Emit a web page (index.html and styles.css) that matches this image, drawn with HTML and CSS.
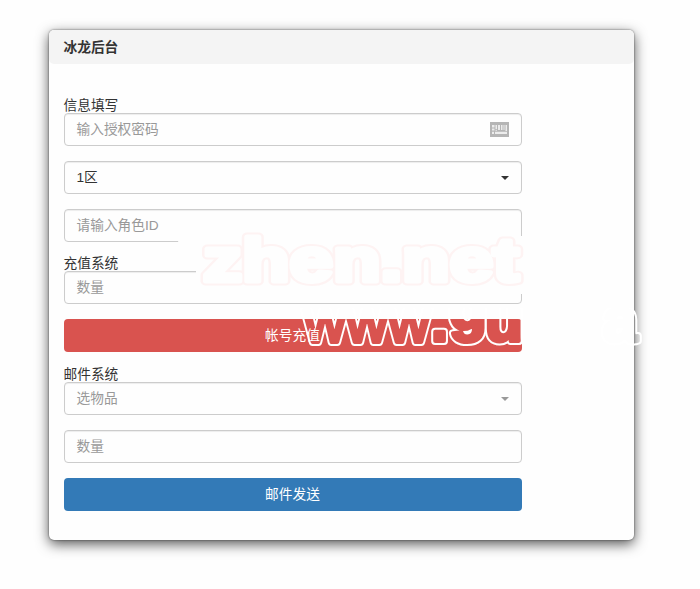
FILE: index.html
```html
<!DOCTYPE html>
<html lang="zh-CN">
<head>
<meta charset="utf-8">
<title>冰龙后台</title>
<link rel="stylesheet" href="styles.css">
</head>
<body>
<main class="panel">
  <header class="panel-heading">冰龙后台</header>
  <form class="panel-body">
    <div class="label">信息填写</div>
    <div class="control muted">输入授权密码
      <svg class="keyboard" width="19" height="15" viewBox="0 0 19 15"><path fill="#b5b5b5" d="M0 0h19v15H0z"/><path fill="#ececec" d="M2 3h2.500v2.500H2zM5.500 3h1.500v4H5.500zM8 3h2v5H8zM11 3h1.500v5H11zM13.500 3h1v5h-1zM15.500 3H17v6h-1.500zM2 6.500h2.500v2H2zM5.500 7.700H7v1H5.500zM2 9.700h2V12H2zM5 9.700h12V12H5z"/></svg>
    </div>
    <div class="control">1区<span class="caret"></span></div>
    <div class="control muted">请输入角色ID</div>
    <div class="label">充值系统</div>
    <div class="control muted">数量</div>
    <div class="button danger">帐号充值</div>
    <div class="label">邮件系统</div>
    <div class="control muted">选物品<span class="caret"></span></div>
    <div class="control muted">数量</div>
    <div class="button primary">邮件发送</div>
  </form>
</main>
<svg class="watermark" width="700" height="589" viewBox="0 0 700 589">
  <defs>
    <g id="site">
      <text class="thin" x="304" y="342" textLength="126" lengthAdjust="spacingAndGlyphs">www</text>
      <text x="431" y="341">.</text>
      <text x="449" y="329">g</text>
      <text x="485" y="341">u</text>
      <text x="603" y="341">a</text>
    </g>
    <mask id="outline" maskUnits="userSpaceOnUse" x="290" y="308" width="370" height="52">
      <use href="#site" class="outer"/>
      <use href="#site" class="inner"/>
    </mask>
  </defs>
  <path fill="#fefefe" d="M178 241L218 236V229H299V241H455L472 229H512V236H523V244H530V260L538 270L522 278V294H380V289H196V270L184 260Z"/>
  <text class="mark-pink" x="203" y="281" textLength="316" lengthAdjust="spacingAndGlyphs">zhen.net</text>
  <text class="mark-fill" x="203" y="281" textLength="316" lengthAdjust="spacingAndGlyphs">zhen.net</text>
  <path mask="url(#outline)" fill="#fff" d="M290 280h370v80H290z"/>
</svg>
</body>
</html>
```
FILE: styles.css
```css
* { box-sizing: border-box; }
body {
  margin: 0;
  padding: 30px 0 0 49px;
  height: 589px;
  overflow: hidden;
  background: #fefefe;
  color: #333;
  font: 13.7px/20px "Liberation Sans", "Noto Sans CJK SC", sans-serif;
}
.panel {
  width: 585px;
  height: 510px;
  background: #fefefe;
  border-radius: 5px;
  box-shadow: 0 4px 13px rgba(0, 0, 0, .68), 0 0 2px rgba(0, 0, 0, .6);
}
.panel-heading {
  height: 34px;
  padding: 0 14.5px;
  line-height: 35px;
  font-weight: bold;
  background: #f4f4f4;
  border-radius: 5px;
}
.panel-body {
  width: 487px;
  padding: 35px 14.5px 0;
}
.label {
  height: 14px;
  line-height: 14px;
  white-space: nowrap;
}
.button + .label { height: 15px; line-height: 15px; }
.control {
  display: flex;
  align-items: center;
  justify-content: space-between;
  height: 33px;
  margin-bottom: 15px;
  padding: 0 12px;
  border: 1px solid #ccc;
  border-radius: 4px;
  box-shadow: inset 0 1px 1px rgba(0, 0, 0, .07);
}
.muted { color: #999; }
.caret {
  border: 4px solid transparent;
  border-top-color: currentColor;
  border-bottom: 0;
}
.button {
  height: 33px;
  margin-bottom: 15px;
  border-radius: 4px;
  line-height: 33px;
  text-align: center;
  color: #fff;
}
.danger { background: #d9534f; }
.primary { background: #337ab7; }
.watermark {
  position: absolute;
  top: 0;
  left: 0;
  pointer-events: none;
}
.watermark text {
  font-family: "Liberation Sans", sans-serif;
  font-weight: bold;
  font-size: 62px;
  stroke-linejoin: round;
}
.watermark .thin { font-weight: normal; }
.watermark .mark-pink {
  stroke: #fef3f3;
  stroke-width: 9px;
}
.watermark .mark-fill {
  fill: #fefefe;
  stroke: #fefefe;
  stroke-width: 5px;
}
.outer {
  fill: #fff;
  stroke: #fff;
  stroke-width: 8px;
}
.inner {
  fill: #000;
  stroke: #000;
  stroke-width: 4px;
}
```
